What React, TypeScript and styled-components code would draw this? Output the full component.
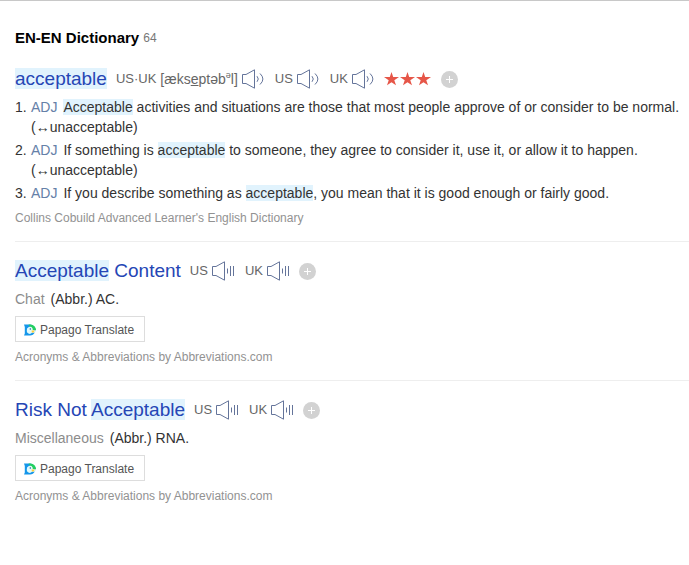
import React from 'react';
import styled, { createGlobalStyle } from 'styled-components';

const GlobalStyle = createGlobalStyle`
  * { box-sizing: border-box; }
  body {
    margin: 0;
    background: #fff;
    color: #333;
    font: 14px/20px "Liberation Sans", Arial, sans-serif;
  }
  button { font-family: inherit; cursor: pointer; }
`;

const Page = styled.main`
  border-top: 1px solid #c8c8c8;
  padding: 27px 0 0 15px;
`;

const SectionHeader = styled.header`
  display: flex;
  align-items: center;
  gap: 4px;
  height: 20px;
  margin-bottom: 2px;
`;

const SectionTitle = styled.h2`
  margin: 0;
  font-size: 15px;
  line-height: 20px;
  color: #000;
`;

const Count = styled.span`
  font-size: 12px;
  color: #777;
`;

const Entry = styled.article`
  padding: 17px 0 14px;

  & + & {
    border-top: 1px solid #eee;
  }
`;

const WordRow = styled.div`
  display: flex;
  align-items: center;
  gap: 9px;
  height: 24px;
`;

const Word = styled.h3`
  margin: 0;
  font-size: 19px;
  line-height: 24px;
  font-weight: 400;
`;

const WordLink = styled.a`
  color: #2546b5;
  text-decoration: none;
`;

const Mark = styled.mark`
  background: #e1f3fd;
  color: inherit;
`;

const Accents = styled.div`
  display: flex;
  gap: 10px;
`;

const Accent = styled.span`
  display: flex;
  align-items: center;
  gap: 4px;
  font-size: 13px;
  color: #666;
  white-space: nowrap;
`;

const Phonetic = styled.span`
  font-size: 14px;

  sup {
    font-size: 9px;
    line-height: 0;
  }
`;

const IconButton = styled.button`
  display: flex;
  padding: 0;
  border: 0;
  background: none;
`;

const Stars = styled.span`
  display: flex;
`;

const Definitions = styled.ol`
  display: grid;
  gap: 3px;
  margin: 6px 0 0;
  padding: 0;
  list-style: none;
`;

const Definition = styled.li`
  display: grid;
  grid-template-columns: 16px 1fr;
`;

const PartOfSpeech = styled.span`
  margin-right: 6px;
  color: #6580a8;
`;

const Antonym = styled.div``;

const Meaning = styled.p`
  display: flex;
  gap: 6px;
  margin: 6px 0 0;
`;

const Category = styled.span`
  color: #8c8c8c;
`;

const TranslateButton = styled.button`
  display: flex;
  align-items: center;
  gap: 4px;
  height: 26px;
  margin-top: 7px;
  padding: 1px 10px 0 8px;
  border: 1px solid #ddd;
  background: #fff;
  color: #555;
  font-size: 12px;
`;

const Source = styled.p`
  margin: 6px 0 0;
  font-size: 12px;
  line-height: 18px;
  color: #929292;
`;

function Speaker({ label, synthetic }: { label: string; synthetic?: boolean }) {
  return (
    <IconButton type="button" aria-label={`Listen, ${label}`}>
      <svg width="23" height="20" viewBox="0 0 23 20" fill="none" stroke="#64749a">
        <path d="M.5 5.5H4L12.5.8V19.2L4 14.5H.5Z" />
        {synthetic ? (
          <path d="M15.5 7.5v5M18.5 5v10M21.5 5v10" />
        ) : (
          <path d="M15 7.2Q17.6 10 15 12.8M18 4.5Q23.8 10 18 15.5" />
        )}
      </svg>
    </IconButton>
  );
}

function AddButton() {
  return (
    <IconButton type="button" aria-label="Add to wordbook">
      <svg width="17" height="17" viewBox="0 0 17 17">
        <circle cx="8.5" cy="8.5" r="8.5" fill="#d2d2d2" />
        <path d="M5 8.5h7M8.5 5v7" stroke="#fff" />
      </svg>
    </IconButton>
  );
}

function Rating() {
  return (
    <Stars role="img" aria-label="3 stars">
      {[0, 1, 2].map((n) => (
        <svg key={n} width="16" height="16" viewBox="0 0 16 16">
          <path d="M7.5 1 9.2 6H15L10.3 9.3 12 14.3 7.5 11.3 3 14.3 4.7 9.3 0 6H5.8Z" fill="#e65648" />
        </svg>
      ))}
    </Stars>
  );
}

function PapagoIcon() {
  return (
    <svg width="12" height="12" viewBox="0 0 12 12">
      <path d="M0 .5H6A6 5.5 0 0 1 11.6 6L10.8 8.6A5.4 5.4 0 0 1 6 11.5H0L.8 9.5V3Z" fill="#1596ea" />
      <path d="M4.5 .5H6.5A5.5 5.5 0 0 1 12 6.2H8.2Z" fill="#24cf60" />
      <path d="M2.8 6.2A3.1 3.1 0 0 1 8.5 4.2L8.8 6 12 6.4 10.8 8.8H8A3 3 0 0 1 2.8 6.2Z" fill="#e2fafb" />
      <path d="M7.6 6.5H10.8L9.6 8.4H7.8Z" fill="#ffcf3a" />
      <circle cx="6.3" cy="5" r=".7" fill="#174e96" />
    </svg>
  );
}

function Abbreviation({ word, category, meaning }: { word: React.ReactNode; category: string; meaning: string }) {
  return (
    <Entry>
      <WordRow>
        <Word><WordLink href="#">{word}</WordLink></Word>
        <Accents>
          <Accent>US<Speaker label="US" synthetic /></Accent>
          <Accent>UK<Speaker label="UK" synthetic /></Accent>
        </Accents>
        <AddButton />
      </WordRow>
      <Meaning><Category>{category}</Category>{meaning}</Meaning>
      <TranslateButton type="button"><PapagoIcon />Papago Translate</TranslateButton>
      <Source>Acronyms &amp; Abbreviations by Abbreviations.com</Source>
    </Entry>
  );
}

export default function App() {
  return (
    <>
      <GlobalStyle />
      <Page>
        <SectionHeader>
          <SectionTitle>EN-EN Dictionary</SectionTitle>
          <Count>64</Count>
        </SectionHeader>
        <Entry>
          <WordRow>
            <Word><WordLink href="#"><Mark>acceptable</Mark></WordLink></Word>
            <Accents>
              <Accent>
                US·UK
                <Phonetic>[æks<u>e</u>ptəb<sup>ə</sup>l]</Phonetic>
                <Speaker label="US and UK" />
              </Accent>
              <Accent>US<Speaker label="US" /></Accent>
              <Accent>UK<Speaker label="UK" /></Accent>
            </Accents>
            <Rating />
            <AddButton />
          </WordRow>
          <Definitions>
            <Definition>
              <span>1.</span>
              <div>
                <PartOfSpeech>ADJ</PartOfSpeech>
                <Mark>Acceptable</Mark> activities and situations are those that most people approve of or consider to be normal.
                <Antonym>(↔unacceptable)</Antonym>
              </div>
            </Definition>
            <Definition>
              <span>2.</span>
              <div>
                <PartOfSpeech>ADJ</PartOfSpeech>
                If something is <Mark>acceptable</Mark> to someone, they agree to consider it, use it, or allow it to happen.
                <Antonym>(↔unacceptable)</Antonym>
              </div>
            </Definition>
            <Definition>
              <span>3.</span>
              <div>
                <PartOfSpeech>ADJ</PartOfSpeech>
                If you describe something as <Mark>acceptable</Mark>, you mean that it is good enough or fairly good.
              </div>
            </Definition>
          </Definitions>
          <Source>Collins Cobuild Advanced Learner's English Dictionary</Source>
        </Entry>
        <Abbreviation word={<><Mark>Acceptable</Mark> Content</>} category="Chat" meaning="(Abbr.) AC." />
        <Abbreviation word={<>Risk Not <Mark>Acceptable</Mark></>} category="Miscellaneous" meaning="(Abbr.) RNA." />
      </Page>
    </>
  );
}
